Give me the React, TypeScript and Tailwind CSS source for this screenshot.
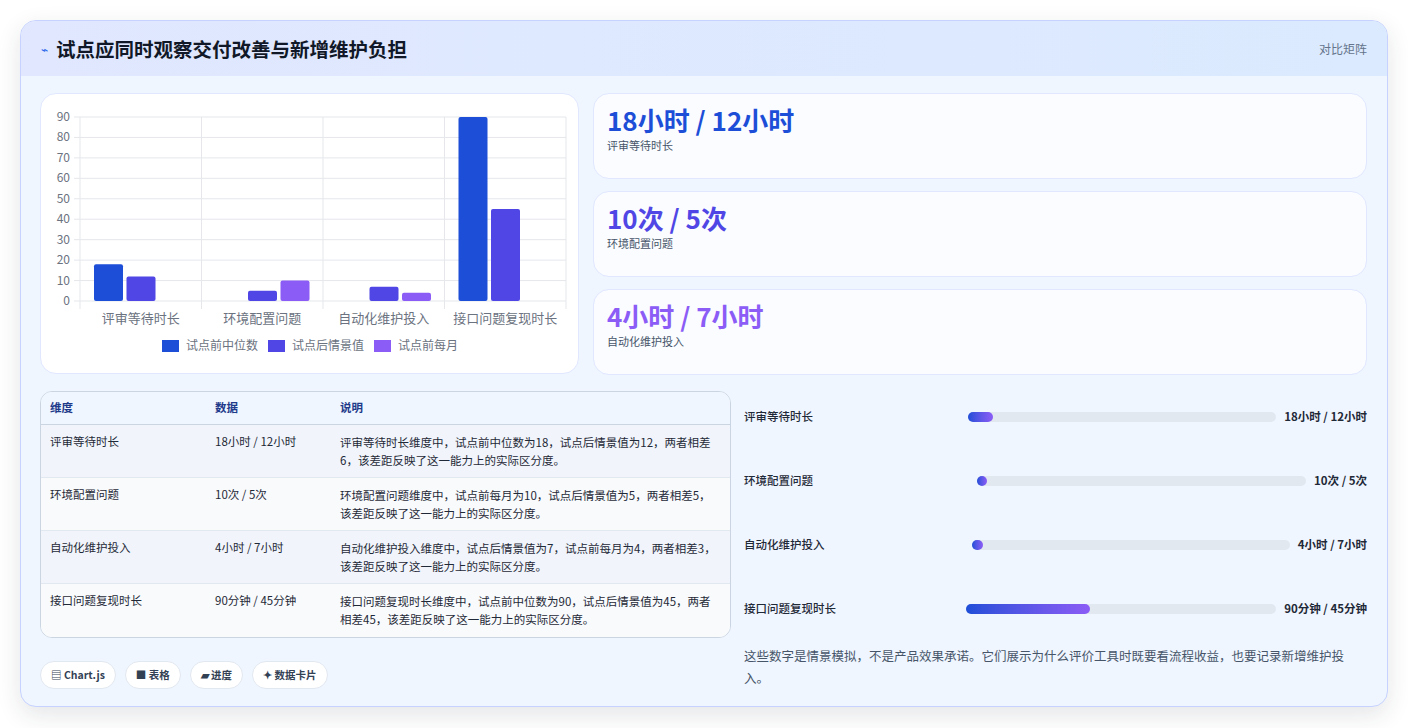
import React from "react";

const font = { fontFamily: '"Noto Sans CJK SC", "Noto Sans", sans-serif' };

const cats = ["评审等待时长", "环境配置问题", "自动化维护投入", "接口问题复现时长"];
const series = [
  { name: "试点前中位数", color: "#1d4ed8", data: [18, null, null, 90] },
  { name: "试点后情景值", color: "#4f46e5", data: [12, 5, 7, 45] },
  { name: "试点前每月", color: "#8b5cf6", data: [null, 10, 4, null] },
];

const Chart = () => {
  const x0 = 39, x1 = 525, y0 = 207, yTop = 23;
  const cw = (x1 - x0) / 4;
  const sy = (v: number) => y0 - ((y0 - yTop) * v) / 90;
  return (
    <svg width="538" height="280" viewBox="0 0 538 280" className="block">
      {[0, 10, 20, 30, 40, 50, 60, 70, 80, 90].map((v) => (
        <g key={v}>
          <line x1={x0 - 6} x2={x1} y1={sy(v)} y2={sy(v)} stroke="#e5e7eb" />
          <text x={x0 - 10} y={sy(v) + 4} fontSize="12" fill="#6b7280" textAnchor="end">{v}</text>
        </g>
      ))}
      {[0, 1, 2, 3, 4].map((i) => (
        <line key={i} x1={x0 + i * cw} x2={x0 + i * cw} y1={yTop} y2={y0 + 8} stroke="#e5e7eb" />
      ))}
      {cats.map((c, i) => (
        <g key={c}>
          {series.map((s, j) => {
            const v = s.data[i];
            if (v == null) return null;
            const bx = x0 + i * cw + 14 + j * 32.5;
            return <rect key={j} x={bx} y={sy(v)} width={29} height={y0 - sy(v)} rx="2" fill={s.color} />;
          })}
          <text x={x0 + i * cw + cw / 2} y={229} fontSize="13" fill="#6b7280" textAnchor="middle">{c}</text>
        </g>
      ))}
      {series.map((s, j) => {
        const lx = [121, 227, 333][j];
        return (
          <g key={s.name}>
            <rect x={lx} y={246} width={17} height={12} fill={s.color} />
            <text x={lx + 24} y={256} fontSize="12" fill="#6b7280">{s.name}</text>
          </g>
        );
      })}
    </svg>
  );
};

const stats = [
  { v: "18小时 / 12小时", l: "评审等待时长", c: "text-[#1d4ed8]" },
  { v: "10次 / 5次", l: "环境配置问题", c: "text-[#4f46e5]" },
  { v: "4小时 / 7小时", l: "自动化维护投入", c: "text-[#8b5cf6]" },
];

const rows = [
  ["评审等待时长", "18小时 / 12小时", "评审等待时长维度中，试点前中位数为18，试点后情景值为12，两者相差6，该差距反映了这一能力上的实际区分度。"],
  ["环境配置问题", "10次 / 5次", "环境配置问题维度中，试点前每月为10，试点后情景值为5，两者相差5，该差距反映了这一能力上的实际区分度。"],
  ["自动化维护投入", "4小时 / 7小时", "自动化维护投入维度中，试点后情景值为7，试点前每月为4，两者相差3，该差距反映了这一能力上的实际区分度。"],
  ["接口问题复现时长", "90分钟 / 45分钟", "接口问题复现时长维度中，试点前中位数为90，试点后情景值为45，两者相差45，该差距反映了这一能力上的实际区分度。"],
];

const bars = [
  { l: "评审等待时长", v: "18小时 / 12小时", w: 8, ml: "ml-0" },
  { l: "环境配置问题", v: "10次 / 5次", w: 3, ml: "ml-[9px]" },
  { l: "自动化维护投入", v: "4小时 / 7小时", w: 3.5, ml: "ml-[4px]" },
  { l: "接口问题复现时长", v: "90分钟 / 45分钟", w: 40, ml: "ml-[-2px]" },
];

export default function App() {
  return (
    <div style={font} className="w-[1408px] h-[728px] bg-white pt-5 px-5">
      <div className="w-[1368px] h-[687px] rounded-2xl border border-[#c7d2fe] bg-[#eff6ff] overflow-hidden shadow-[0_8px_24px_rgba(30,41,59,0.12)]">
        <div className="h-[55px] flex items-center justify-between pl-5 pr-[20px] bg-gradient-to-r from-[#e0e7ff] to-[#dbeafe]">
          <div className="flex items-center gap-2">
            <span className="text-[#2563eb] text-[12px]">⌁</span>
            <h1 className="text-[19.5px] font-bold text-[#111827]">试点应同时观察交付改善与新增维护负担</h1>
          </div>
          <span className="text-[12px] text-[#64748b]">对比矩阵</span>
        </div>
        <div className="pl-[19px] pr-5 pt-[17px]">
          <div className="flex gap-[14px]">
            <div className="w-[539px] h-[281px] rounded-2xl bg-white border border-[#e0e7ff] overflow-hidden">
              <Chart />
            </div>
            <div className="flex-1 flex flex-col gap-[12px]">
              {stats.map((s) => (
                <div key={s.l} className="h-[86px] rounded-2xl bg-[#fafcff] border border-[#e0e7ff] px-[13px] pt-[8px]">
                  <div className={`text-[26px] font-bold leading-[35px] ${s.c}`}>{s.v}</div>
                  <div className="text-[11px] text-[#475569]">{s.l}</div>
                </div>
              ))}
            </div>
          </div>
          <div className="flex gap-[13px] mt-[16px]">
            <div className="w-[691px] shrink-0">
              <div className="rounded-xl border border-[#cbd5e1] overflow-hidden bg-[#f8fafc]">
                <div className="flex h-[33px] items-center bg-[#eff6ff] border-b border-[#cbd5e1] text-[11.5px] font-bold text-[#1e3a8a]">
                  <div className="w-[174px] pl-[9px]">维度</div>
                  <div className="w-[125px]">数据</div>
                  <div className="flex-1">说明</div>
                </div>
                {rows.map((r, i) => (
                  <div key={r[0]} className={`flex h-[53px] pt-[8px] text-[11.5px] text-[#1f2937] ${i < 3 ? "border-b border-[#e2e8f0]" : ""} ${i % 2 === 0 ? "bg-[#f1f5fb]" : "bg-[#f8fafc]"}`}>
                    <div className="w-[174px] pl-[9px]">{r[0]}</div>
                    <div className="w-[125px]">{r[1]}</div>
                    <div className="flex-1 pr-[12px] leading-[18px]">{r[2]}</div>
                  </div>
                ))}
              </div>
              <div className="flex gap-[9px] mt-[23px]">
                {["▤ Chart.js", "■ 表格", "▰ 进度", "✦ 数据卡片"].map((t) => (
                  <span key={t} className="h-[28px] px-[10px] flex items-center rounded-full bg-white border border-[#e2e8f0] text-[10.5px] font-bold text-[#334155]">{t}</span>
                ))}
              </div>
            </div>
            <div className="flex-1 mt-[-6px]">
              {bars.map((b) => (
                <div key={b.l} className="flex items-center h-[64px] text-[11.5px] text-[#1f2937]">
                  <div className="w-[224px] shrink-0 font-medium">{b.l}</div>
                  <div className={`flex-1 h-[10px] rounded-full bg-[#e2e8f0] ${b.ml}`}>
                    <div className="h-full rounded-full bg-gradient-to-r from-[#1d4ed8] to-[#8b5cf6] min-w-[10px]" style={{ width: `${b.w}%` }} />
                  </div>
                  <div className="ml-[8px] whitespace-nowrap font-bold">{b.v}</div>
                </div>
              ))}
              <p className="mt-[4px] text-[12.5px] leading-[22px] text-[#475569]">这些数字是情景模拟，不是产品效果承诺。它们展示为什么评价工具时既要看流程收益，也要记录新增维护投入。</p>
            </div>
          </div>
        </div>
      </div>
    </div>
  );
}
